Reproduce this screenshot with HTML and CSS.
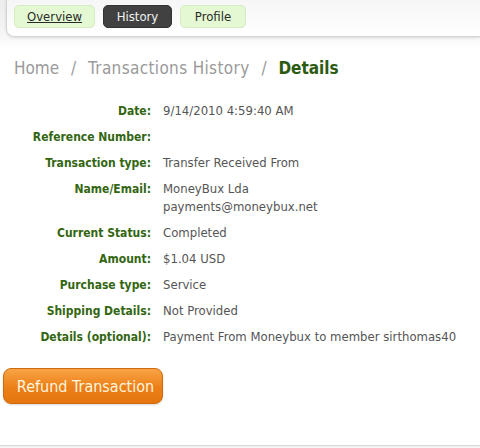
FILE: index.html
```html
<!DOCTYPE html>
<html lang="en">
  <head>
    <meta charset="UTF-8" />
    <title>Transaction Details</title>
    <link rel="stylesheet" href="styles.css">
  </head>
  <body>
    <div class="header">
      <div class="tabbar">
        <a class="tab tab-current" href="#">Overview</a>
        <a class="tab tab-dark" href="#">History</a>
        <a class="tab" href="#">Profile</a>
      </div>
    </div>

    <div class="breadcrumb">
      <span>Home</span> <span class="sep">/</span>
      <span class="wide">Transactions History</span> <span class="sep">/</span>
      <strong>Details</strong>
    </div>

    <div class="details">
      <div class="label">Date:</div>
      <div class="value">9/14/2010 4:59:40 AM</div>

      <div class="label">Reference Number:</div>
      <div class="value"></div>

      <div class="label">Transaction type:</div>
      <div class="value">Transfer Received From</div>

      <div class="label">Name/Email:</div>
      <div class="value">MoneyBux Lda<br />payments@moneybux.net</div>

      <div class="label">Current Status:</div>
      <div class="value">Completed</div>

      <div class="label">Amount:</div>
      <div class="value">$1.04 USD</div>

      <div class="label">Purchase type:</div>
      <div class="value">Service</div>

      <div class="label">Shipping Details:</div>
      <div class="value">Not Provided</div>

      <div class="label">Details (optional):</div>
      <div class="value">Payment From Moneybux to member sirthomas40</div>
    </div>

    <button class="refund-btn">Refund Transaction</button>

    <div class="footer"></div>
  </body>
</html>
```

FILE: styles.css
```css
body {
  margin: 0;
  font-family: "DejaVu Sans Condensed", "DejaVu Sans", sans-serif;
  color: #444;
  background-color: #fff;
}
.header {
  height: 50px;
  background: linear-gradient(#ececec, #f4f4f4 60%, #fff);
}
.tabbar {
  display: flex;
  gap: 8px;
  margin-left: 6px;
  height: 37px;
  padding: 5px 0 0 7px;
  box-sizing: border-box;
  background: linear-gradient(#f6f6f6, #fff);
  border: 1px solid #d4d4d4;
  border-top: none;
  border-right: none;
  border-bottom-left-radius: 8px;
  box-shadow: 0 1px 3px rgba(0, 0, 0, 0.12);
}
.tab {
  display: block;
  height: 23px;
  line-height: 22px;
  padding: 0 12px;
  box-sizing: border-box;
  border-radius: 5px;
  border: 1px solid #d3ecc0;
  background-color: #e4f9d3;
  color: #2a2a2a;
  font-size: 13px;
  text-decoration: none;
}
.tab-current {
  width: 81px;
  text-align: center;
  text-decoration: underline;
}
.tab-dark {
  width: 69px;
  text-align: center;
  background-color: #414141;
  border-color: #333;
  color: #f2f2f2;
}
.tab:last-child {
  width: 66px;
  text-align: center;
}
.breadcrumb {
  padding: 8px 0 0 14px;
  height: 45px;
  box-sizing: border-box;
  font-size: 17px;
  color: #9a9a9a;
}
.breadcrumb .sep {
  margin: 0 7px;
}
.breadcrumb .wide {
  letter-spacing: 0.35px;
}
.breadcrumb strong {
  color: #2b5a10;
}
.details {
  display: grid;
  grid-template-columns: 151px 1fr;
  column-gap: 12px;
  row-gap: 8px;
  margin-top: 7px;
  line-height: 18px;
}
.label {
  text-align: right;
  font-size: 12px;
  font-weight: bold;
  color: #336611;
}
.value {
  font-size: 13px;
  color: #555;
}
.refund-btn {
  display: block;
  margin: 22px 0 0 3px;
  padding: 0 0 0 5px;
  width: 160px;
  height: 36px;
  font-family: inherit;
  font-size: 16px;
  color: #fff6df;
  background: linear-gradient(#f8a445, #ec7f18 55%, #e5760f);
  border: 1px solid #d06a0c;
  border-radius: 8px;
  box-shadow: 0 1px 2px rgba(0, 0, 0, 0.15);
}
.footer {
  margin-top: 41px;
  height: 3px;
  border-top: 1px solid #d8d8d8;
  background: linear-gradient(#eee, #fff);
}
```
